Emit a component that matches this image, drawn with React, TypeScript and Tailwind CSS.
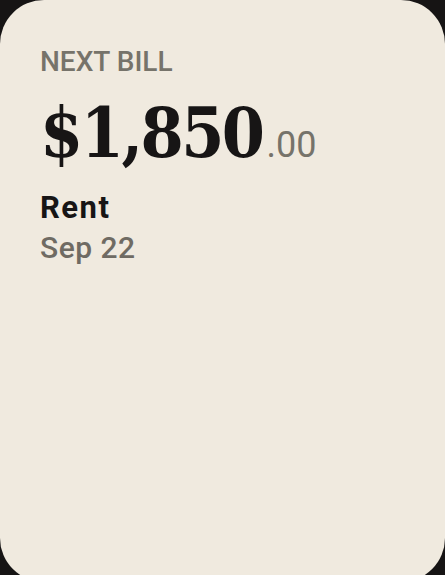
export default function App() {
  return (
    <div className="h-[575px] w-[445px] overflow-hidden bg-[#161414]">
      <div className="h-[582px] w-[445px] rounded-[44px] bg-[#f0eadf] px-[40px] pt-[48px] font-['Roboto',sans-serif]">
        <p className="text-[28px] font-medium leading-none text-[#76736a]">NEXT BILL</p>
        <div className="mt-[22px] flex items-baseline leading-none">
          <span className="font-['DejaVu_Serif_Condensed','DejaVu_Serif',serif] text-[69px] font-bold leading-none tracking-[-2.5px] text-[#171515] [font-stretch:condensed]">
            $1,850
          </span>
          <span className="ml-[4px] text-[36px] leading-none text-[#76736a]">.00</span>
        </div>
        <p className="mt-[25px] text-[31px] font-bold leading-none tracking-[1.5px] text-[#171515]">Rent</p>
        <p className="mt-[10px] text-[30px] font-medium leading-none tracking-[0.5px] text-[#6f6b63]">Sep 22</p>
      </div>
    </div>
  );
}
